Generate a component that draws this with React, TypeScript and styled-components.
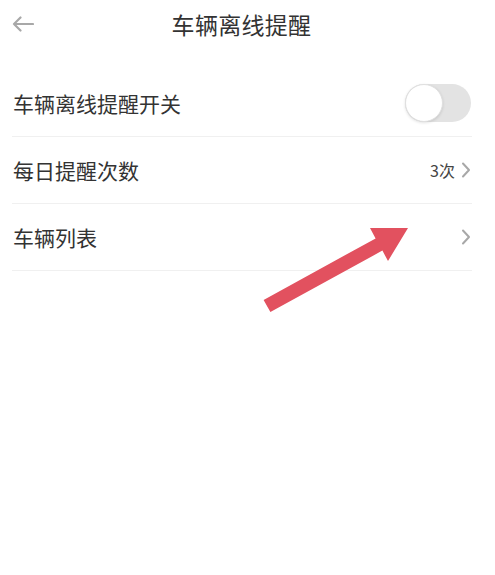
import styled, { createGlobalStyle } from "styled-components";

const GlobalStyle = createGlobalStyle`
  html, body {
    margin: 0;
    padding: 0;
    background: #ffffff;
  }
  body {
    font-family: "Noto Sans CJK SC", "Noto Sans", sans-serif;
    color: #333333;
  }
`;

export default function App() {
  return (
    <Page>
      <GlobalStyle />
      <Header>
        <BackButton aria-label="返回">
          <svg width="22" height="16" viewBox="0 0 22 16" fill="none">
            <path
              d="M21 8H2M8.5 1.5L2 8l6.5 6.5"
              stroke="#a8a8a8"
              strokeWidth="2.2"
              strokeLinecap="round"
              strokeLinejoin="round"
            />
          </svg>
        </BackButton>
        <Title>车辆离线提醒</Title>
      </Header>

      <List>
        <Row>
          <Label>车辆离线提醒开关</Label>
          <Toggle $on={false}>
            <Knob $on={false} />
          </Toggle>
        </Row>
        <Row>
          <Label>每日提醒次数</Label>
          <Extra>
            <Value>3次</Value>
            <Chevron />
          </Extra>
        </Row>
        <Row>
          <Label>车辆列表</Label>
          <Extra>
            <Chevron />
          </Extra>
        </Row>
      </List>

      <Pointer width="495" height="575" viewBox="0 0 495 575">
        <polygon
          points="263.6,299.9 375.6,238.4 370,228 408,228 388,261 382.4,250.6 270.4,312.1"
          fill="#e2515f"
        />
      </Pointer>
    </Page>
  );
}

function Chevron() {
  return (
    <ChevronIcon width="10" height="18" viewBox="0 0 10 18" fill="none">
      <path
        d="M2 2.5l6 6.5-6 6.5"
        stroke="#a8a8a8"
        strokeWidth="2"
        strokeLinecap="round"
        strokeLinejoin="round"
      />
    </ChevronIcon>
  );
}

const Page = styled.div`
  position: relative;
  width: 495px;
  height: 575px;
  overflow: hidden;
  background: #fff;
`;

const Header = styled.div`
  position: relative;
  height: 48px;
  display: flex;
  align-items: center;
  justify-content: center;
`;

const BackButton = styled.button`
  position: absolute;
  left: 12px;
  top: 16px;
  padding: 0;
  border: none;
  background: none;
  display: flex;
`;

const Title = styled.h1`
  margin: 0 0 0 -12px;
  font-size: 23px;
  font-weight: 400;
  color: #333;
  letter-spacing: 0.3px;
`;

const List = styled.div`
  margin: 22px 0 0 12px;
  width: 460px;
`;

const Row = styled.div`
  height: 66px;
  display: flex;
  align-items: center;
  justify-content: space-between;
  border-bottom: 1px solid #f0f0f0;
`;

const Label = styled.span`
  margin-left: 1px;
  font-size: 21px;
  color: #333;
`;

const Extra = styled.div`
  display: flex;
  align-items: center;
  gap: 6px;
  margin-right: 1px;
`;

const Value = styled.span`
  font-size: 16px;
  color: #444;
`;

const ChevronIcon = styled.svg`
  display: block;
`;

const Toggle = styled.div<{ $on: boolean }>`
  position: relative;
  width: 66px;
  height: 38px;
  border-radius: 19px;
  background: ${(p) => (p.$on ? "#4cd964" : "#e3e3e3")};
  margin-right: 1px;
`;

const Knob = styled.div<{ $on: boolean }>`
  position: absolute;
  top: 0;
  left: ${(p) => (p.$on ? "28px" : "0")};
  width: 38px;
  height: 38px;
  box-sizing: border-box;
  border-radius: 50%;
  background: #fff;
  border: 1px solid #e0e0e0;
  box-shadow: 0 1px 3px rgba(0, 0, 0, 0.12);
`;

const Pointer = styled.svg`
  position: absolute;
  left: 0;
  top: 0;
  pointer-events: none;
`;
